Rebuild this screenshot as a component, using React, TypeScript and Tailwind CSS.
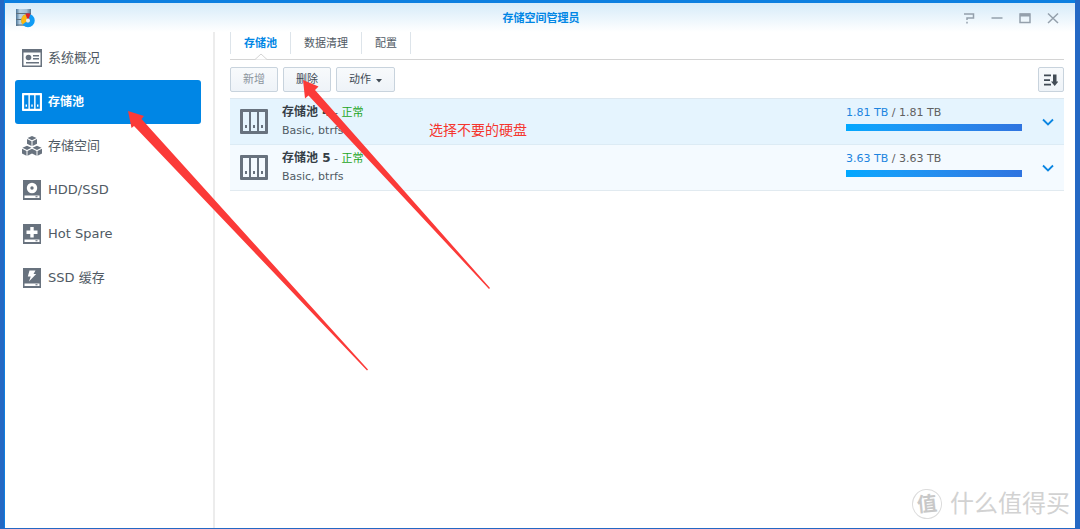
import type { ReactNode } from "react"

const navItems: { label: string; icon: ReactNode; active?: boolean }[] = [
  { label: "系统概况", icon: <OverviewIcon /> },
  { label: "存储池", icon: <PoolIcon className="h-[18px] w-5" />, active: true },
  { label: "存储空间", icon: <VolumeIcon /> },
  { label: "HDD/SSD", icon: <DiskIcon kind="disk" /> },
  { label: "Hot Spare", icon: <DiskIcon kind="spare" /> },
  { label: "SSD 缓存", icon: <DiskIcon kind="cache" /> },
]

const tabs = ["存储池", "数据清理", "配置"]

const pools = [
  { id: 4, type: "Basic, btrfs", used: 1.81, total: 1.81, selected: true },
  { id: 5, type: "Basic, btrfs", used: 3.63, total: 3.63, selected: false },
]

function AppLogo() {
  return (
    <svg viewBox="0 0 20 20" className="h-5 w-5" aria-hidden="true">
      <defs>
        <linearGradient id="rack" x1="0" x2="1">
          <stop offset="0" stopColor="#4a7396" />
          <stop offset="0.25" stopColor="#b9d3e6" />
          <stop offset="0.7" stopColor="#a3bfd3" />
          <stop offset="1" stopColor="#55748c" />
        </linearGradient>
      </defs>
      <path d="M1 1h15v17H1z" fill="url(#rack)" />
      <path d="M1 5.5h15M1 11.5h15M1 17h15" stroke="#5d6f7d" strokeWidth="1" />
      <circle cx="13" cy="12.500" r="4.500" fill="none" stroke="#109cf5" strokeWidth="4.500" />
      <path d="M13 12.500 7.500 16.500A6.800 6.800 0 0 1 10.500 6z" fill="#fdb813" />
      <path d="M13 12.500 10.500 5.800a7 7 0 0 1 5 0z" fill="#e0202c" />
      <circle cx="13" cy="12.500" r="2" fill="#e4edf3" />
    </svg>
  )
}

function OverviewIcon() {
  return (
    <svg viewBox="0 0 20 18" className="h-[18px] w-5" fill="currentColor" aria-hidden="true">
      <path fillRule="evenodd" d="M0 0h20v18H0zM1.500 3.500v13h17v-13z" />
      <circle cx="6.500" cy="8.500" r="2.800" />
      <path d="M11 6h6v1.500h-6zM11 9h6v1.500h-6zM4 13h13v1.500H4z" />
    </svg>
  )
}

function PoolIcon({ className }: { className: string }) {
  return (
    <svg viewBox="0 0 28 25" className={className} preserveAspectRatio="none" fill="currentColor" aria-hidden="true">
      <path
        fillRule="evenodd"
        d="M1 0h26a1 1 0 0 1 1 1v23a1 1 0 0 1-1 1H1a1 1 0 0 1-1-1V1a1 1 0 0 1 1-1zM3 3v19h6V3zM11 3v19h6V3zM19 3v19h6V3z"
      />
      <path d="M5 16h2v3H5zM13 16h2v3h-2zM21 16h2v3h-2z" />
    </svg>
  )
}

function Cube({ x, y }: { x: number; y: number }) {
  return (
    <g transform={`translate(${x} ${y})`}>
      <path d="M5 0 9.500 2 5 4.200.5 2zM0 3l4.500 2.200V10L0 7.800zM10 3 5.500 5.200V10L10 7.800z" />
    </g>
  )
}

function VolumeIcon() {
  return (
    <svg viewBox="0 0 20 20" className="h-5 w-5" fill="currentColor" aria-hidden="true">
      <Cube x={5} y={0} />
      <Cube x={0} y={9.7} />
      <Cube x={10} y={9.7} />
    </svg>
  )
}

function DiskIcon({ kind }: { kind: "disk" | "spare" | "cache" }) {
  return (
    <svg viewBox="0 0 18 20" className="h-5 w-5" fill="currentColor" aria-hidden="true">
      <path d="M0 0h18v20H0z" />
      <path d="M1.500 15.500h15V18h-15z" fill="#fff" />
      <path d="M12.500 16.200h2V17.300h-2z" />
      {kind === "disk" && (
        <>
          <circle cx="9" cy="8" r="5.200" fill="#fff" />
          <circle cx="9" cy="8" r="1.700" />
        </>
      )}
      {kind === "spare" && <path d="M7.300 3h3.400v3.600h3.800v3.400h-3.800v3.600H7.300V10H3.500V6.600h3.800z" fill="#fff" />}
      {kind === "cache" && <path d="M6.500 2.500h6L10.500 6h2.700L6 13.500l1.700-5H4.800z" fill="#fff" />}
    </svg>
  )
}

function WindowControls() {
  const button = "flex h-5 w-7 items-center justify-center"
  return (
    <div className="flex text-[#94a0ac]">
      <button type="button" aria-label="帮助" className={button}>
        <svg viewBox="0 0 12 12" className="h-3 w-3" fill="none" stroke="currentColor" strokeWidth="1.500">
          <path d="M1 2h9.500v4H4v2M4 9.800v1.700" />
        </svg>
      </button>
      <button type="button" aria-label="最小化" className={button}>
        <svg viewBox="0 0 12 12" className="h-3 w-3" stroke="currentColor" strokeWidth="1.500">
          <path d="M0.500 6h11" />
        </svg>
      </button>
      <button type="button" aria-label="最大化" className={button}>
        <svg viewBox="0 0 12 12" className="h-3 w-3" fill="none" stroke="currentColor">
          <path d="M1 2h10v8.500H1z" strokeWidth="1.500" />
          <path d="M1 3h10" strokeWidth="3" />
        </svg>
      </button>
      <button type="button" aria-label="关闭" className={button}>
        <svg viewBox="0 0 12 12" className="h-3 w-3" stroke="currentColor" strokeWidth="1.500">
          <path d="M1 1.500l10 9.500M11 1.500L1 11" />
        </svg>
      </button>
    </div>
  )
}

function Sidebar() {
  return (
    <nav className="w-[210px] shrink-0 border-r-2 border-[#ececec] pt-1 pr-3 pl-[10px]">
      {navItems.map((item) => (
        <a
          key={item.label}
          href="#"
          className={
            item.active
              ? "flex h-11 items-center gap-[6px] rounded-[3px] bg-[#0086e5] pl-[7px] text-[12px] font-bold text-white"
              : "flex h-11 items-center gap-[6px] pl-[7px] text-[13px] text-[#505a64]"
          }
        >
          <span className={item.active ? "text-white" : "text-[#68727e]"}>{item.icon}</span>
          {item.label}
        </a>
      ))}
    </nav>
  )
}

function Tabs() {
  return (
    <div role="tablist" className="flex h-7 items-start border-b border-[#d4d4d4]">
      {tabs.map((tab, i) => (
        <button
          key={tab}
          type="button"
          role="tab"
          aria-selected={i === 0}
          className={
            i === 0
              ? "relative h-[22px] border-x border-[#dde4ea] px-[13px] pt-[2px] font-bold text-[#0086e5]"
              : "h-[22px] border-r border-[#dde4ea] px-[13px] pt-[2px] text-[#505a64]"
          }
        >
          {tab}
          {i === 0 && (
            <svg viewBox="0 0 12 7" className="absolute top-[21px] left-6 h-[7px] w-3" fill="#fff" stroke="#d4d4d4">
              <path d="M0 6.500 6 1l6 5.500" />
            </svg>
          )}
        </button>
      ))}
    </div>
  )
}

function Toolbar() {
  const button =
    "flex h-[25px] items-center justify-center rounded-[2px] border border-[#c8d3dd] bg-linear-to-b from-[#f8fafc] to-[#eef3f8]"
  return (
    <div className="flex items-center gap-[5px] pt-[7px] pb-[6px] text-[#414b55]">
      <button type="button" disabled className={`${button} px-3 pt-[2px] text-[#8b949d]`}>
        新增
      </button>
      <button type="button" className={`${button} px-3 pt-[2px]`}>
        删除
      </button>
      <button type="button" className={`${button} gap-[5px] px-3 pt-[2px]`}>
        动作
        <svg viewBox="0 0 6 4" className="h-1 w-[6px]" fill="currentColor">
          <path d="M0 0h6L3 3.500z" />
        </svg>
      </button>
      <button type="button" aria-label="排序" className={`${button} ml-auto w-[26px]`}>
        <svg viewBox="0 0 14 12" className="h-3 w-[14px]" fill="currentColor">
          <path d="M0 .5h7v1.700H0zM0 5.200h6v1.700H0zM0 9.800h7v1.700H0zM9 .5h3.500V7.500h2L10.700 12 7 7.500h2z" />
        </svg>
      </button>
    </div>
  )
}

function PoolRow({ pool }: { pool: (typeof pools)[number] }) {
  return (
    <div
      className={
        pool.selected
          ? "flex items-start border-b border-[#dcebf5] bg-[#e5f4fe] py-1 pr-2 pl-[10px]"
          : "flex items-start border-b border-[#e1eaf0] bg-[#f4faff] py-1 pr-2 pl-[10px]"
      }
    >
      <span className="pt-[6px] pr-[14px] text-[#68727e]">
        <PoolIcon className="h-[25px] w-7" />
      </span>
      <div className="text-[#505a64]">
        <h2 className="leading-[18px]">
          <span className="text-[12px] font-bold text-[#353e47]">存储池 {pool.id}</span> -{" "}
          <span className="text-[#1ca51c]">正常</span>
        </h2>
        <p className="leading-[18px]">{pool.type}</p>
      </div>
      <div className="ml-auto w-44 pt-[2px] text-[#606060]">
        <p className="pb-[3px] leading-4">
          <span className="text-[#1c84e0]">{pool.used} TB</span> / {pool.total} TB
        </p>
        <div
          className="h-[7px] bg-linear-to-r from-[#00a8ff] to-[#2f74e0]"
          style={{ width: `${(pool.used / pool.total) * 100}%` }}
        />
      </div>
      <button
        type="button"
        aria-label={`展开存储池 ${pool.id}`}
        className="ml-[18px] self-center p-[2px] text-[#0b86e2]"
      >
        <svg viewBox="0 0 12 12" className="h-3 w-3" fill="none" stroke="currentColor" strokeWidth="1.800">
          <path d="M1 3.500l5 5 5-5" />
        </svg>
      </button>
    </div>
  )
}

function Annotations() {
  return (
    <>
      <svg className="pointer-events-none absolute top-0 left-0 h-[380px] w-[500px]" fill="#fb3a38" aria-hidden="true">
        <path d="M128 111 144 116 141.500 119 368 369.500 367 370.500 134 126 131.500 128z" />
        <path d="M303 80 318.500 86.500 315 90 490 288 489 289 308.500 95.500 305 98.500z" />
      </svg>
      <p className="pointer-events-none absolute top-[120px] left-[429px] text-[14px] leading-5 text-[#f5362f]">
        选择不要的硬盘
      </p>
    </>
  )
}

function Watermark() {
  return (
    <div className="pointer-events-none absolute right-[10px] bottom-[9px] flex items-center gap-2 text-[24px] leading-8 text-[#d2d2d2]">
      <span className="flex h-[30px] w-[30px] -rotate-6 items-center justify-center rounded-full border border-[#dcdcdc] text-[20px] font-bold text-[#c8c8c8]">
        值
      </span>
      什么值得买
    </div>
  )
}

export default function App() {
  return (
    <div className="relative flex min-h-screen flex-col bg-[#2468c4] pr-[5px] pb-px pl-1 font-['DejaVu_Sans','Noto_Sans_CJK_SC',sans-serif] text-[11px]">
      <div className="flex grow flex-col border-t-[3px] border-l border-[#0c7fe0] bg-white">
        <header className="flex h-[29px] items-center bg-linear-to-b from-[#d6ebf9] to-white pr-2 pl-[10px]">
          <div className="flex-1">
            <AppLogo />
          </div>
          <h1 className="pt-[3px] font-bold text-[#0086e5]">存储空间管理员</h1>
          <div className="flex flex-1 justify-end">
            <WindowControls />
          </div>
        </header>
        <div className="flex grow">
          <Sidebar />
          <main className="min-w-0 grow pr-[11px] pl-[15px]">
            <Tabs />
            <Toolbar />
            <div className="border-t border-[#dde8f0]">
              {pools.map((pool) => (
                <PoolRow key={pool.id} pool={pool} />
              ))}
            </div>
          </main>
        </div>
      </div>
      <Annotations />
      <Watermark />
    </div>
  )
}
